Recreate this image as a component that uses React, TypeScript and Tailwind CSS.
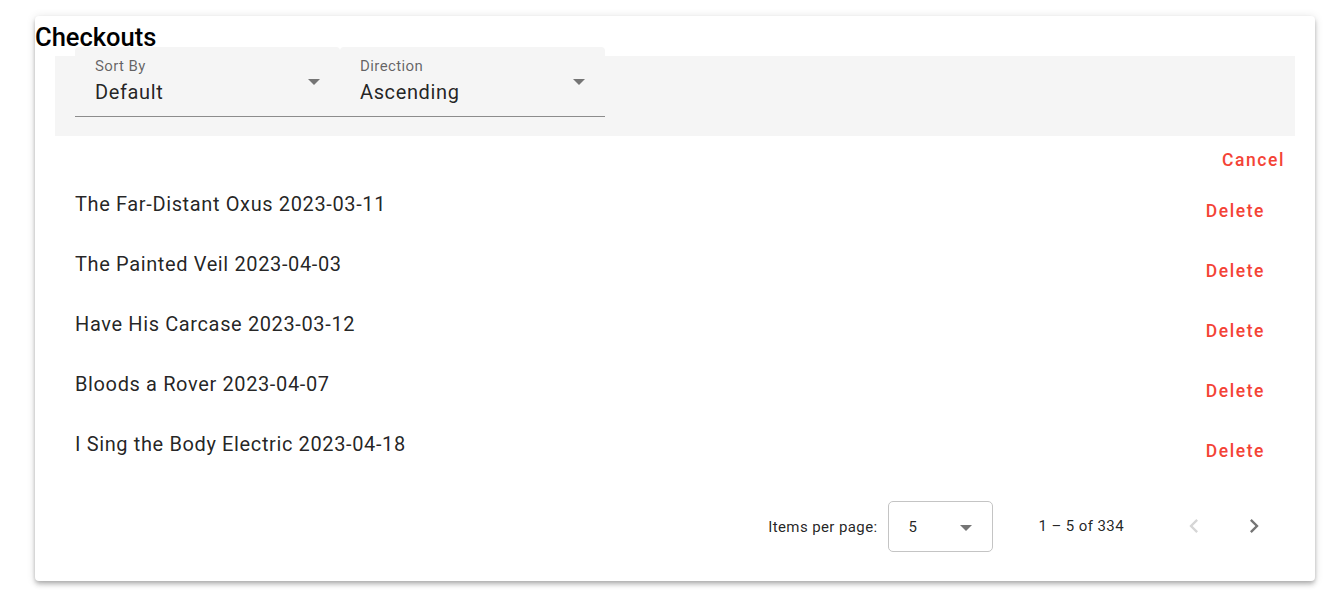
import React from "react";

const rows = [
  "The Far-Distant Oxus 2023-03-11",
  "The Painted Veil 2023-04-03",
  "Have His Carcase 2023-03-12",
  "Bloods a Rover 2023-04-07",
  "I Sing the Body Electric 2023-04-18",
];

function Arrow({ className }: { className?: string }) {
  return (
    <svg width="12" height="6" viewBox="0 0 12 6" className={className}>
      <path d="M0 0 L12 0 L6 6 Z" fill="currentColor" />
    </svg>
  );
}

function Field({ label, value }: { label: string; value: string }) {
  return (
    <div className="flex h-[70px] w-[265px] rounded-t-[4px] border-b border-[#8c8c8c] bg-[#f5f5f5] px-5">
      <div className="flex flex-1 flex-col pt-[10px]">
        <div className="text-[15px] leading-[18px] tracking-[0.4px] text-black/60">{label}</div>
        <div className="mt-[5px] text-[20px] leading-[24px] tracking-[0.625px] text-black/[0.87]">{value}</div>
      </div>
      <Arrow className="mt-[32px] text-[#757575]" />
    </div>
  );
}

function Chevron({ dir, className }: { dir: "left" | "right"; className?: string }) {
  return (
    <svg width="28" height="28" viewBox="0 0 24 24" className={className}>
      {dir === "left" ? (
        <path d="M15.41 7.41L14 6l-6 6 6 6 1.41-1.41L10.83 12z" fill="currentColor" />
      ) : (
        <path d="M10 6L8.59 7.41 13.17 12l-4.58 4.59L10 18l6-6z" fill="currentColor" />
      )}
    </svg>
  );
}

export default function App() {
  return (
    <div className="min-h-[593px] bg-white pt-[16px] pl-[35px]" style={{ fontFamily: "Roboto, 'Liberation Sans', sans-serif" }}>
      <div className="w-[1280px] rounded-[4px] bg-white pb-[20px] shadow-[0_2px_4px_-1px_rgba(0,0,0,0.2),0_4px_5px_0_rgba(0,0,0,0.14),0_1px_10px_0_rgba(0,0,0,0.12)]">
        <h2 className="h-[40px] pt-[1px] text-[25.5px] font-medium leading-[40px] text-black">Checkouts</h2>
        <div className="mx-5 flex h-[80px] bg-[#f5f5f5] px-5">
          <div className="-mt-[9px] flex h-[70px]">
            <Field label="Sort By" value="Default" />
            <Field label="Direction" value="Ascending" />
          </div>
        </div>
        <div className="mx-5 flex h-[45px] items-center justify-end pr-[10px]">
          <span className="mt-[4px] text-[17.5px] font-medium tracking-[1.5625px] text-[#f44336]">Cancel</span>
        </div>
        <div className="mx-5">
          {rows.map((r) => (
            <div key={r} className="flex h-[60px] items-center justify-between pl-5 pr-[30px]">
              <span className="mb-[14px] text-[20px] leading-[24px] tracking-[0.625px] text-black/[0.87]">{r}</span>
              <span className="text-[17.5px] font-medium tracking-[1.5625px] text-[#f44336]">Delete</span>
            </div>
          ))}
        </div>
        <div className="mx-5 mt-[10px] flex h-[70px] items-center justify-end pr-[11px] text-[15px] tracking-[0.4px] text-black/[0.87]">
          <span className="mt-[3px]">Items per page:</span>
          <div className="ml-[10px] flex h-[51px] w-[105px] items-center justify-between rounded-[5px] border border-[#c4c4c4] pl-5 pr-5">
            <span className="mt-[3px]">5</span>
            <Arrow className="mt-[4px] text-[#757575]" />
          </div>
          <span className="ml-[46px] mr-[40px] mt-[1px]">1 – 5 of 334</span>
          <div className="flex h-[60px] w-[60px] items-center justify-center">
            <Chevron dir="left" className="text-[#d6d6d6]" />
          </div>
          <div className="flex h-[60px] w-[60px] items-center justify-center">
            <Chevron dir="right" className="text-[#757575]" />
          </div>
        </div>
      </div>
    </div>
  );
}
